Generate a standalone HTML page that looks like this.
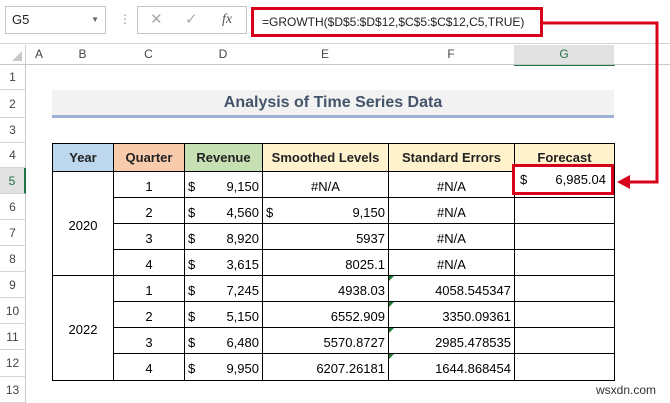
<!DOCTYPE html>
<html><head><style>
body{margin:0;width:670px;height:403px;background:#fff;position:relative;overflow:hidden;font-family:"Liberation Sans",sans-serif;}
.a{position:absolute;box-sizing:border-box;}
.ch{position:absolute;top:45px;height:19px;font-size:12px;color:#444;text-align:center;line-height:19px;border-right:1px solid #d4d4d4;background:#fff;}
.rh{position:absolute;left:0;width:26px;font-size:12px;color:#444;text-align:center;border-bottom:1px solid #d4d4d4;border-right:1px solid #c8c8c8;box-sizing:border-box;}
td{border:1px solid #000;padding:3px 3px 0 3px;font-size:13px;height:25px;box-sizing:border-box;color:#000;}
table{border-collapse:collapse;position:absolute;left:52px;top:143px;table-layout:fixed;}
th{border:1px solid #000;font-size:13px;font-weight:bold;height:25px;color:#222;}
.r{text-align:right}.c{text-align:center}
.d{display:flex;justify-content:space-between}
.tri{position:relative}
.tri:before{content:"";position:absolute;left:0;top:0;border-top:5px solid #1e7b34;border-right:5px solid transparent;}
</style></head><body>
<div class="a" style="left:0;top:0;width:670px;height:44px;background:#fff;border-bottom:1px solid #d4d4d4"></div>
<div class="a" style="left:5px;top:6px;width:101px;height:28px;border:1px solid #c6c6c6;font-size:13px;line-height:26px;padding-left:6px;color:#222">G5<span style="position:absolute;right:6px;font-size:8px;color:#666">▼</span></div>
<div class="a" style="left:119px;top:12px;font-size:12px;color:#999">⋮</div>
<div class="a" style="left:137px;top:6px;width:110px;height:28px;border:1px solid #c6c6c6;font-size:15px;line-height:26px;color:#aaa"><span style="position:absolute;left:12px">✕</span><span style="position:absolute;left:47px">✓</span><span style="position:absolute;left:84px;font-family:'Liberation Serif',serif;font-style:italic;color:#555;font-size:14px">fx</span></div>
<div class="a" style="left:251px;top:7px;width:292px;height:30px;border:3px solid #d9001b;font-size:12px;line-height:24px;padding-left:8px;color:#222;background:#fff;white-space:nowrap">=GROWTH($D$5:$D$12,$C$5:$C$12,C5,TRUE)</div>
<div class="a" style="left:0;top:45px;width:26px;height:19px;border-right:1px solid #d4d4d4;background:#fff"><div style="position:absolute;right:3px;bottom:3px;border-left:10px solid transparent;border-bottom:10px solid #c8c8c8"></div></div>
<div class="ch" style="left:26px;width:26px">A</div>
<div class="ch" style="left:52px;width:61px">B</div>
<div class="ch" style="left:113px;width:71px">C</div>
<div class="ch" style="left:184px;width:78px">D</div>
<div class="ch" style="left:262px;width:126px">E</div>
<div class="ch" style="left:388px;width:126px">F</div>
<div class="ch" style="left:514px;width:100px;background:#e1e1e1;color:#217346;border-bottom:2px solid #217346;height:19px">G</div>
<div class="ch" style="left:614px;width:56px;border:none"></div>
<div class="a" style="left:0;top:64px;width:670px;height:1px;background:#c8c8c8"></div>
<div class="rh" style="top:65px;height:25px;line-height:25px">1</div>
<div class="rh" style="top:90px;height:28px;line-height:28px">2</div>
<div class="rh" style="top:118px;height:25px;line-height:25px">3</div>
<div class="rh" style="top:143px;height:25px;line-height:25px">4</div>
<div class="rh" style="top:168px;height:26px;line-height:26px;background:#e1e1e1;color:#217346;border-right:2px solid #217346">5</div>
<div class="rh" style="top:194px;height:26px;line-height:26px">6</div>
<div class="rh" style="top:220px;height:26px;line-height:26px">7</div>
<div class="rh" style="top:246px;height:26px;line-height:26px">8</div>
<div class="rh" style="top:272px;height:26px;line-height:26px">9</div>
<div class="rh" style="top:298px;height:26px;line-height:26px">10</div>
<div class="rh" style="top:324px;height:26px;line-height:26px">11</div>
<div class="rh" style="top:350px;height:27px;line-height:27px">12</div>
<div class="rh" style="top:377px;height:26px;line-height:26px">13</div>
<div class="a" style="left:52px;top:90px;width:562px;height:25px;background:#f2f2f2;text-align:center;font-size:16px;font-weight:bold;color:#44546a;line-height:25px">Analysis of Time Series Data</div>
<div class="a" style="left:52px;top:115px;width:562px;height:3px;background:#9db0d6"></div>
<table>
<colgroup><col style="width:61px"><col style="width:71px"><col style="width:78px"><col style="width:126px"><col style="width:126px"><col style="width:100px"></colgroup>
<tr><th style="background:#bdd7ee">Year</th><th style="background:#f8cbad">Quarter</th><th style="background:#c6e0b4">Revenue</th><th style="background:#fff2cc">Smoothed Levels</th><th style="background:#fff2cc">Standard Errors</th><th style="background:#fff2cc">Forecast</th></tr>
<tr style="height:26px"><td rowspan="4" class="c">2020</td><td class="c">1</td><td><div class="d"><span>$</span><span>9,150</span></div></td><td class="c">#N/A</td><td class="c">#N/A</td><td></td></tr>
<tr style="height:26px"><td class="c">2</td><td><div class="d"><span>$</span><span>4,560</span></div></td><td><div class="d"><span>$</span><span>9,150</span></div></td><td class="c">#N/A</td><td></td></tr>
<tr style="height:26px"><td class="c">3</td><td><div class="d"><span>$</span><span>8,920</span></div></td><td class="r">5937</td><td class="c">#N/A</td><td></td></tr>
<tr style="height:26px"><td class="c">4</td><td><div class="d"><span>$</span><span>3,615</span></div></td><td class="r">8025.1</td><td class="c">#N/A</td><td></td></tr>
<tr style="height:26px"><td rowspan="4" class="c">2022</td><td class="c">1</td><td><div class="d"><span>$</span><span>7,245</span></div></td><td class="r">4938.03</td><td class="r tri">4058.545347</td><td></td></tr>
<tr style="height:26px"><td class="c">2</td><td><div class="d"><span>$</span><span>5,150</span></div></td><td class="r">6552.909</td><td class="r tri">3350.09361</td><td></td></tr>
<tr style="height:26px"><td class="c">3</td><td><div class="d"><span>$</span><span>6,480</span></div></td><td class="r">5570.8727</td><td class="r tri">2985.478535</td><td></td></tr>
<tr style="height:27px"><td class="c">4</td><td><div class="d"><span>$</span><span>9,950</span></div></td><td class="r">6207.26181</td><td class="r tri">1644.868454</td><td></td></tr>
</table>
<div class="a" style="left:512px;top:164px;width:102px;height:31px;border:3px solid #d9001b;font-size:13px;line-height:25px;padding:0 5px;display:flex;justify-content:space-between;background:#fff"><span>$</span><span>6,985.04</span></div>
<svg class="a" style="left:0;top:0" width="670" height="403">
<polyline points="543,23 657,23 657,182 628,182" fill="none" stroke="#d9001b" stroke-width="3"/>
<polygon points="617,182 630,175 630,189" fill="#d9001b"/>
</svg>
<div class="a" style="left:596px;top:383px;font-size:12px;color:#333">wsxdn.com</div>
</body></html>
